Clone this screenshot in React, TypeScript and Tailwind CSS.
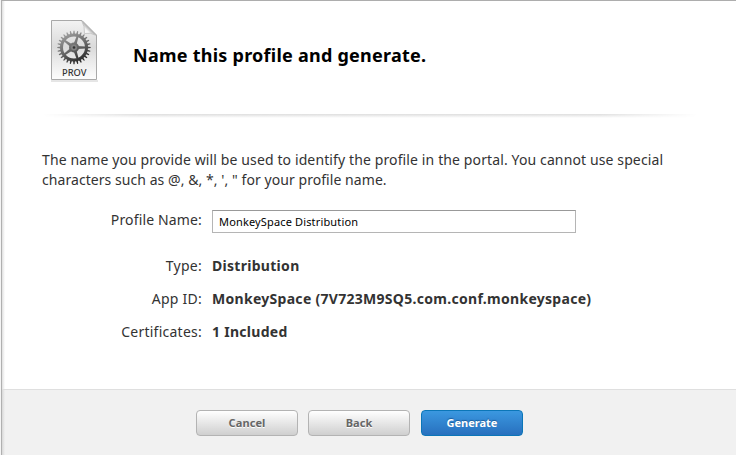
import type { ReactNode } from "react";

const TEETH = Array.from({ length: 28 }, (_, i) => (i * 360) / 28);
const SPOKES = [18, 90, 162, 234, 306];

function ProfileIcon() {
  return (
    <svg width="50" height="64" viewBox="49 18 50 64" className="block">
      <defs>
        <linearGradient id="page" x1="0" y1="0" x2="0" y2="1">
          <stop offset="0" stopColor="#f3f3f3" />
          <stop offset="0.45" stopColor="#dadada" />
          <stop offset="0.65" stopColor="#e8e8e8" />
          <stop offset="1" stopColor="#fdfdfd" />
        </linearGradient>
        <linearGradient id="gear" gradientUnits="userSpaceOnUse" x1="66" y1="32" x2="82" y2="64">
          <stop offset="0" stopColor="#a0a0a0" />
          <stop offset="0.5" stopColor="#686868" />
          <stop offset="1" stopColor="#1c1c1c" />
        </linearGradient>
        <linearGradient id="fold" x1="0" y1="1" x2="1" y2="0">
          <stop offset="0" stopColor="#fff" />
          <stop offset="0.35" stopColor="#f4f4f4" />
          <stop offset="0.55" stopColor="#9a9a9a" />
        </linearGradient>
        <mask id="gearShape" maskUnits="userSpaceOnUse" x="56" y="30" width="36" height="36">
          <circle cx="74" cy="47.500" r="12.500" fill="none" stroke="#fff" strokeWidth="3" />
          {TEETH.map((a) => (
            <path key={a} d="M73 34.500L73.500 30.800H74.500L75 34.500Z" transform={`rotate(${a} 74 47.500)`} fill="#fff" />
          ))}
          {SPOKES.map((a) => (
            <path key={a} d="M72.500 44L73 36H75L75.500 44Z" transform={`rotate(${a} 74 47.500)`} fill="#fff" />
          ))}
          <circle cx="74" cy="47.500" r="5" fill="#fff" />
        </mask>
      </defs>
      <path d="M51 81H98" stroke="#ccc" strokeWidth="1" />
      <path d="M51.5 20.5H82L96.5 35V79.5H51.5Z" fill="url(#page)" stroke="#a9a9a9" />
      <path d="M81.500 20.500L96.500 35.500Q90 32 84.500 33.500Q85 26 81.500 20.500Z" fill="url(#fold)" stroke="#b0b0b0" strokeWidth="0.6" />
      <rect x="56" y="30" width="36" height="36" fill="url(#gear)" mask="url(#gearShape)" />
      <circle cx="74" cy="47.500" r="3" fill="#838383" />
      <circle cx="74" cy="47.500" r="1.300" fill="#333" />
      <text x="62" y="76" textLength="24.500" lengthAdjust="spacingAndGlyphs" fontFamily="'Noto Sans', sans-serif" fontSize="9.500" fontWeight="500" fill="#333">PROV</text>
    </svg>
  );
}

function Row({ label, children }: { label: string; children: ReactNode }) {
  return (
    <div className="flex h-[33px] items-center">
      <span className="w-[200px] text-right tracking-[0.25px]">{label}</span>
      <span className="ml-[10px] whitespace-nowrap font-bold tracking-[0.29px]">{children}</span>
    </div>
  );
}

export default function App() {
  return (
    <div className="flex h-[455px] w-[736px] overflow-hidden bg-white font-['Noto_Sans','Lucida_Grande',sans-serif] text-[14px] text-[#333]">
      <div className="w-px bg-[#f4f4f4]" />
      <div className="w-px bg-[#b0b0b0]" />
      <div className="flex flex-1 flex-col border-t border-[#adadad] bg-linear-to-r from-[#e0e0e0] to-white to-[3px]">
        <header className="flex h-[113px] pl-[47px] pt-[17px]">
          <ProfileIcon />
          <h1 className="ml-[34px] mt-[23px] text-[18px] font-bold leading-[28px] tracking-[0.25px] text-black">Name this profile and generate.</h1>
        </header>
        <div className="ml-[40px] h-[4px] w-[656px] bg-linear-to-b from-[#dedede] to-white mask-[linear-gradient(to_right,transparent,black_15%,black_85%,transparent)]" />
        <main className="flex-1 pt-[32px]">
          <p className="ml-[40px] whitespace-nowrap leading-[20px]">
            <span className="block tracking-[0.12px]">The name you provide will be used to identify the profile in the portal. You cannot use special</span>
            <span className="block tracking-[0.06px]">characters such as @, &amp;, *, ', " for your profile name.</span>
          </p>
          <div className="mt-[20px] flex h-[24px]">
            <label htmlFor="profile-name" className="w-[200px] text-right leading-[20px] tracking-[0.15px]">Profile Name:</label>
            <input
              id="profile-name"
              defaultValue="MonkeySpace Distribution"
              className="ml-[10px] h-[23px] w-[364px] border border-[#b5b5b5] border-t-[#999] bg-white px-[6px] text-[11px] tracking-[0.15px] text-black outline-none"
            />
          </div>
          <div className="mt-[15px]">
            <Row label="Type:">Distribution</Row>
            <Row label="App ID:">MonkeySpace (7V723M9SQ5.com.conf.monkeyspace)</Row>
            <Row label="Certificates:">1 Included</Row>
          </div>
        </main>
        <footer className="flex h-[66px] gap-[10px] border-t border-[#dfdfdf] bg-linear-to-r from-[#d8d8d8] to-[#f1f1f1] to-[3px] pl-[194px] pt-[20px] text-[11px] font-bold">
          <button className="h-[26px] w-[102px] rounded-[4px] border border-[#b3b3b3] bg-linear-to-b from-white to-[#cfcfcf] tracking-[0.1px] text-[#666] text-shadow-[0_1px_0_#fff]">Cancel</button>
          <button className="h-[26px] w-[102px] rounded-[4px] border border-[#b3b3b3] bg-linear-to-b from-white to-[#cfcfcf] text-[#666] text-shadow-[0_1px_0_#fff]">Back</button>
          <button className="ml-px h-[26px] w-[102px] rounded-[4px] border border-[#0b76b8] bg-linear-to-b from-[#3b98e0] to-[#2870be] text-white text-shadow-[0_-1px_1px_#1b5c9b]">Generate</button>
        </footer>
      </div>
    </div>
  );
}
